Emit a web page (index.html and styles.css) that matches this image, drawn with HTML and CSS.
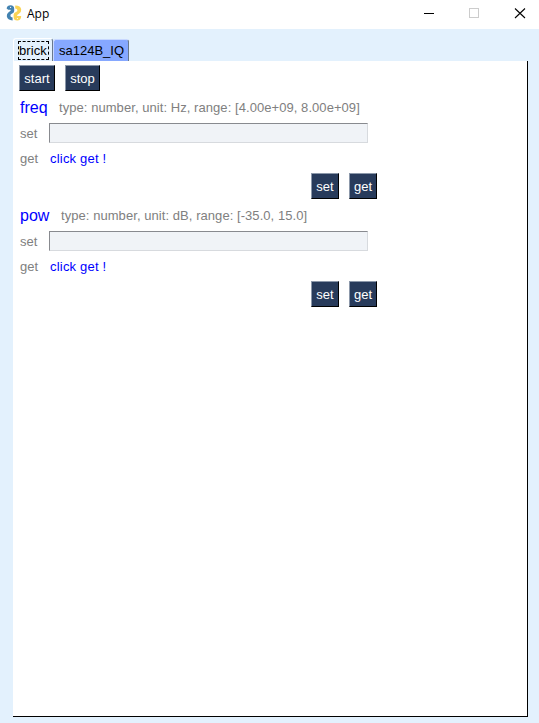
FILE: index.html
```html
<!DOCTYPE html>
<html lang="en">
<head>
<meta charset="utf-8">
<title>App</title>
<link rel="stylesheet" href="styles.css">
</head>
<body>
<header class="titlebar">
  <svg class="logo" width="16" height="16" viewBox="0 0 16 16">
    <path fill="#4382b0" d="M.6 3.6Q1.2.3 4.6.3Q8.2.4 8.2 3.8V6Q8 8.2 5.8 8.8Q4.2 9.4 4.4 11Q4.6 12.4 6.6 12.6V15.4Q1.4 15.2.8 11.2Q.6 8.8 2.6 7.2L4.6 5.8V4.8H2.2Z"/>
    <path fill="#fad455" d="M9.2.5Q14.8.6 15.2 4.6Q15.4 7 13.2 8.6L11.2 10V11H15.2Q15 15.6 11.2 15.6Q7.6 15.6 7.6 12V9.8Q7.8 7.8 10 7Q11.6 6.4 11.4 5Q11.2 3.6 9.2 3.4Z"/>
    <circle cx="4.6" cy="2.3" r=".6" fill="#fff"/>
    <circle cx="11.4" cy="13.5" r=".6" fill="#fff"/>
  </svg>
  <span class="title">App</span>
  <svg class="controls" width="103" height="11" viewBox="0 0 103 11" fill="none" shape-rendering="crispEdges">
    <path d="M0 5.5H10" stroke="#000"/>
    <rect x="45.5" y=".5" width="9" height="9" stroke="#ccc"/>
    <path d="M91 .5L101 10M101 .5L91 10" stroke="#000" stroke-width="1.1" shape-rendering="auto"/>
  </svg>
</header>
<main class="window">
  <nav class="tabs">
    <div class="tab active"><span class="focus">brick</span></div>
    <div class="tab other">sa124B_IQ</div>
  </nav>
  <section class="panel">
    <div class="toolbar"><button class="start">start</button><button class="stop">stop</button></div>
    <section class="param">
      <div class="heading"><span class="name freq">freq</span><span class="info">type: number, unit: Hz, range: [4.00e+09, 8.00e+09]</span></div>
      <div class="line"><span class="label">set</span><input class="field" type="text"></div>
      <div class="line reading"><span class="label">get</span><span class="value">click get !</span></div>
      <div class="actions"><button>set</button><button>get</button></div>
    </section>
    <section class="param">
      <div class="heading"><span class="name pow">pow</span><span class="info">type: number, unit: dB, range: [-35.0, 15.0]</span></div>
      <div class="line"><span class="label">set</span><input class="field" type="text"></div>
      <div class="line reading"><span class="label">get</span><span class="value">click get !</span></div>
      <div class="actions"><button>set</button><button>get</button></div>
    </section>
  </section>
</main>
</body>
</html>
```
FILE: styles.css
```css
* { box-sizing: border-box; }
body {
  margin: 0;
  height: 723px;
  display: flex;
  flex-direction: column;
  background: #e3f1fd;
  font: 13px/16px "Liberation Sans", Arial, sans-serif;
  overflow: hidden;
}
.titlebar {
  height: 29px;
  flex: none;
  display: flex;
  align-items: center;
  padding: 0 12px 3px 6px;
  background: #fff;
}
.title { margin-left: 5px; font: 12px/16px "Open Sans", sans-serif; padding-top: 2px; }
.controls { margin-left: auto; }
.window { flex: 1; display: flex; flex-direction: column; padding: 9px 11px 6px 13px; }
.tabs { height: 23px; display: flex; align-items: flex-start; gap: 1px; }
.tab { border-top: 1px solid #fff; border-left: 1px solid #fff; border-right: 1px solid #69798c; border-radius: 3px 3px 0 0; white-space: nowrap; }
.active { width: 40px; height: 24px; padding: 2px 0 0 4px; background: #e3f1fd; }
.focus { display: block; width: 31px; height: 19px; line-height: 18px; border: 1px dashed #000; letter-spacing: .1px; }
.other { width: 76px; height: 22px; margin: 1px 0 0 -1px; padding-left: 5px; line-height: 21px; background: #86a8ff; border-left-color: #c8d8ff; border-top-color: #c8d8ff; }
.panel { flex: 1; background: #fff; border-right: 1px solid #000; border-bottom: 1px solid #000; padding: 4px 0 0 6px; }
.toolbar { display: flex; gap: 10px; }
button {
  width: 28px;
  height: 26px;
  padding: 1px 0 0;
  border: 1px solid;
  border-color: #8c98aa #000 #000 #8c98aa;
  background: #283b5b;
  color: #fff;
  font: 13px/23px "Liberation Sans", Arial, sans-serif;
}
.start { width: 36px; }
.stop { width: 35px; }
.param { width: 358px; height: 108px; padding-top: 4px; }
.heading { height: 25px; display: flex; align-items: center; white-space: nowrap; }
.name { padding-left: 1px; font-size: 16px; line-height: 20px; color: #00f; }
.freq { width: 40px; }
.pow { width: 42px; }
.info { color: #808080; letter-spacing: .06px; }
.line { height: 26px; display: flex; align-items: center; }
.reading { height: 25px; }
.label { width: 30px; padding-left: 1px; color: #808080; }
.line:not(.reading) .label { padding-top: 1px; }
.field { width: 319px; height: 20px; margin-bottom: 1px; padding: 0 2px; border: 1px solid; border-color: #888a8f #d7dade #d7dade #888a8f; background: #f0f3f7; outline: none; }
.value { padding-left: 1px; color: #00f; letter-spacing: .2px; }
.actions { display: flex; justify-content: flex-end; gap: 10px; padding-top: 2px; }
```
